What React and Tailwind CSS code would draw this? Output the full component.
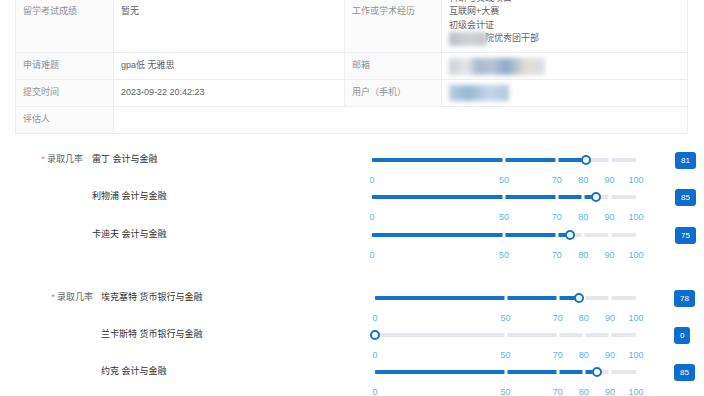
const FONT = "[font-family:'Liberation_Sans','Noto_Sans_CJK_SC',sans-serif]"

const MARKS = [0, 50, 70, 80, 90, 100]
const STOPS = [50, 70, 80, 90]

const GROUP_A = [
  { name: '雷丁 会计与金融', value: 81 },
  { name: '利物浦 会计与金融', value: 85 },
  { name: '卡迪夫 会计与金融', value: 75 },
]

const GROUP_B = [
  { name: '埃克塞特 货币银行与金融', value: 78 },
  { name: '兰卡斯特 货币银行与金融', value: 0 },
  { name: '约克 会计与金融', value: 85 },
]

function Slider({ value, className }) {
  return (
    <div className={className}>
      <div className="relative mt-[6px] h-[4px] rounded-[1px] bg-[#e4e7ed]">
        <div className="absolute left-0 top-0 h-full rounded-[1px] bg-[#1472cc]" style={{ width: `${value}%` }} />
        {STOPS.map((s) => (
          <div key={s} className="absolute top-0 h-full w-[3px] -translate-x-1/2 bg-white" style={{ left: `${s}%` }} />
        ))}
        <div
          className="absolute top-1/2 h-[10px] w-[10px] -translate-x-1/2 -translate-y-1/2 rounded-full border-2 border-[#1472cc] bg-white"
          style={{ left: `${value}%` }}
        />
      </div>
      <div className="relative mt-[12px] h-[12px]">
        {MARKS.map((m) => (
          <span
            key={m}
            className="absolute top-0 -translate-x-1/2 text-[9px] leading-[12px] text-[#5bb8dc]"
            style={{ left: `${m}%` }}
          >
            {m}
          </span>
        ))}
      </div>
    </div>
  )
}

function Badge({ value }) {
  return (
    <span className="inline-block h-[17px] rounded-[3px] bg-[#0e6ecf] px-[6px] text-[8px] leading-[17px] text-white">{value}</span>
  )
}

function Blur({ className }) {
  return <span className={`inline-block align-middle blur-[2.5px] ${className}`} />
}

function Line({ children }) {
  return <div className="flex h-[13.5px] items-center overflow-visible whitespace-nowrap">{children}</div>
}

export default function App() {
  const label = 'bg-[#fafafa] text-[#909399] border border-[#ebeef5] px-[7px] py-0'
  const cell = 'bg-white text-[#606266] border border-[#ebeef5] px-[7px] py-0'

  return (
    <div className={`min-h-[396px] w-[704px] overflow-hidden bg-white text-[9px] leading-[13.5px] ${FONT}`}>
      <div className="pl-[15px] -mt-[29px]">
        <table className="w-[672px] table-fixed border-collapse">
          <colgroup>
            <col className="w-[98px]" />
            <col className="w-[231px]" />
            <col className="w-[97px]" />
            <col className="w-[246px]" />
          </colgroup>
          <tbody>
            <tr className="h-[81px]">
              <td className={label}><Line>留学考试成绩</Line></td>
              <td className={cell}><Line>暂无</Line></td>
              <td className={label}><Line>工作或学术经历</Line></td>
              <td className={cell}>
                <Line>社会实践经历</Line>
                <Line>科研与实践项目</Line>
                <Line>互联网+大赛</Line>
                <Line>初级会计证</Line>
                <Line>
                  <Blur className="h-[14px] w-[38px] bg-[linear-gradient(90deg,#b9bcc4,#d0d2d8,#c4c6cc)]" />
                  <span className="-ml-[2px]">院优秀团干部</span>
                </Line>
              </td>
            </tr>
            <tr className="h-[27px]">
              <td className={label}><Line>申请难题</Line></td>
              <td className={cell}><Line>gpa低 无雅思</Line></td>
              <td className={label}><Line>邮箱</Line></td>
              <td className={cell}>
                <Line>
                  <Blur className="h-[17px] w-[96px] bg-[linear-gradient(90deg,#c9ccd2_0%,#e6e8ec_18%,#aab8cc_30%,#b8c4d6_45%,#8fa9c6_60%,#e3ddd4_80%,#d8dde6_100%)]" />
                </Line>
              </td>
            </tr>
            <tr className="h-[27px]">
              <td className={label}><Line>提交时间</Line></td>
              <td className={cell}><Line>2023-09-22 20:42:23</Line></td>
              <td className={label}><Line>用户（手机）</Line></td>
              <td className={cell}>
                <Line>
                  <Blur className="h-[16px] w-[60px] bg-[linear-gradient(90deg,#b6cde2,#9ab6d3,#c7d6e6,#b2c6dc)]" />
                </Line>
              </td>
            </tr>
            <tr className="h-[27px]">
              <td className={label}><Line>评估人</Line></td>
              <td className={cell} colSpan={3}>
                <Line>&nbsp;</Line>
              </td>
            </tr>
          </tbody>
        </table>
      </div>

      <div className="mt-[17.5px]">
        {GROUP_A.map((r, i) => (
          <div key={r.name} className="flex h-[37.5px]">
            <div className="flex w-[92px] justify-end pr-[9px] leading-[14px] text-[#606266]">
              {i === 0 && (
                <>
                  <span className="mr-[2px] text-[#f56c6c]">*</span>
                  <span>录取几率</span>
                </>
              )}
            </div>
            <div className="w-[280px] leading-[14px] text-[#303133]">{r.name}</div>
            <Slider value={r.value} className="w-[264px]" />
            <div className="ml-[39px]">
              <Badge value={r.value} />
            </div>
          </div>
        ))}
      </div>

      <div className="mt-[25.5px]">
        {GROUP_B.map((r, i) => (
          <div key={r.name} className="flex h-[37px]">
            <div className="flex w-[101px] justify-end pr-[8px] leading-[14px] text-[#606266]">
              {i === 0 && (
                <>
                  <span className="mr-[2px] text-[#f56c6c]">*</span>
                  <span>录取几率</span>
                </>
              )}
            </div>
            <div className="w-[274px] leading-[14px] text-[#303133]">{r.name}</div>
            <Slider value={r.value} className="w-[261px]" />
            <div className="ml-[38px]">
              <Badge value={r.value} />
            </div>
          </div>
        ))}
      </div>
    </div>
  )
}
